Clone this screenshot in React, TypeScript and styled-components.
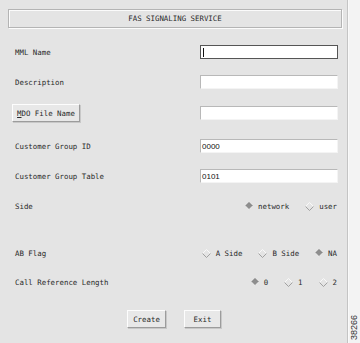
import { FC } from "react";
import styled, { createGlobalStyle } from "styled-components";

const GlobalStyle = createGlobalStyle`
  html, body {
    margin: 0;
    padding: 0;
    background: #f3f3f3;
  }
  body {
    font-family: "DejaVu Sans Mono", "Liberation Mono", monospace;
  }
`;

const Page = styled.div`
  display: flex;
  width: 360px;
  height: 343px;
  overflow: hidden;
`;

const Panel = styled.div`
  width: 348px;
  height: 343px;
  background: #e4e4e4;
  border-right: 1px solid #c4c4c4;
  box-shadow: 1px 0 0 #fafafa;
  display: flex;
  flex-direction: column;
  box-sizing: border-box;
  padding: 9px 0 0 0;
`;

const Strip = styled.div`
  flex: 1;
  display: flex;
  align-items: flex-end;
  justify-content: center;
  padding-bottom: 3px;
`;

const FigNo = styled.span`
  writing-mode: vertical-rl;
  transform: rotate(180deg);
  font-family: "Liberation Sans", Arial, sans-serif;
  font-size: 9px;
  color: #333;
`;

const TitleBar = styled.div`
  margin-left: 8px;
  width: 334px;
  height: 19px;
  box-sizing: border-box;
  border: 1px solid #b4b4b4;
  box-shadow: inset 1px 1px 0 #fbfbfb, 1px 1px 0 #fbfbfb;
  display: flex;
  align-items: center;
  justify-content: center;
  font-size: 7.4px;
  color: #2a2a2a;
`;

const Row = styled.div<{ $top: number; $h?: number }>`
  margin-top: ${(p) => p.$top}px;
  height: ${(p) => p.$h ?? 14}px;
  display: flex;
  align-items: center;
  padding: 0 9px 0 15px;
  font-size: 7.4px;
  color: #2a2a2a;
`;

const Label = styled.span`
  flex: 1;
`;

const Field = styled.div<{ $focused?: boolean }>`
  width: 138px;
  height: 14px;
  box-sizing: border-box;
  background: #fff;
  border-top: 1px solid ${(p) => (p.$focused ? "#555" : "#b8b8b8")};
  border-left: 1px solid ${(p) => (p.$focused ? "#555" : "#b8b8b8")};
  border-right: 1px solid ${(p) => (p.$focused ? "#555" : "#f4f4f4")};
  border-bottom: 1px solid ${(p) => (p.$focused ? "#555" : "#f4f4f4")};
  display: flex;
  align-items: center;
  padding-left: 1px;
  font-family: "Liberation Sans", Arial, sans-serif;
  font-size: 8px;
  color: #111;
`;

const Caret = styled.span`
  width: 1px;
  height: 9px;
  margin-left: 1px;
  background: #111;
`;

const Bevel = styled.button<{ $w: number }>`
  width: ${(p) => p.$w}px;
  height: 18px;
  padding: 0;
  box-sizing: border-box;
  background: #e8e8e8;
  border-top: 1px solid #fdfdfd;
  border-left: 1px solid #fdfdfd;
  border-right: 1px solid #9c9c9c;
  border-bottom: 1px solid #9c9c9c;
  box-shadow: 1px 1px 0 #c8c8c8;
  font-family: "DejaVu Sans Mono", "Liberation Mono", monospace;
  font-size: 7.4px;
  color: #2a2a2a;
  display: flex;
  align-items: center;
  justify-content: center;
`;

const MdoButton = styled(Bevel)`
  margin-left: -3px;
`;

const Mnemonic = styled.span`
  text-decoration: underline;
`;

const Choices = styled.div`
  display: flex;
  align-items: center;
  gap: 16px;
  padding-right: 1px;
`;

const Choice = styled.span`
  display: flex;
  align-items: center;
  gap: 5px;
`;

const ButtonBar = styled.div`
  margin-top: 21px;
  display: flex;
  gap: 18px;
  padding-left: 127px;
`;

const Diamond: FC<{ on?: boolean }> = ({ on }) =>
  on ? (
    <svg width="8" height="8" viewBox="0 0 9 9">
      <path d="M4.5 0.5 L8.5 4.5 L4.5 8.5 L0.5 4.5 Z" fill="#8e8e8e" />
      <path d="M0.5 4.5 L4.5 0.5 L8.5 4.5" fill="none" stroke="#707070" strokeWidth="0.8" />
      <path d="M0.5 4.5 L4.5 8.5 L8.5 4.5" fill="none" stroke="#fafafa" strokeWidth="0.8" />
    </svg>
  ) : (
    <svg width="9" height="9" viewBox="0 0 9 9">
      <path d="M0.5 4.5 L4.5 0.5 L8.5 4.5" fill="none" stroke="#fafafa" strokeWidth="0.9" />
      <path d="M0.5 4.5 L4.5 8.5 L8.5 4.5" fill="none" stroke="#999" strokeWidth="0.9" />
    </svg>
  );

const Radio: FC<{ on?: boolean; text: string }> = ({ on, text }) => (
  <Choice>
    <Diamond on={on} />
    {text}
  </Choice>
);

export default function App() {
  return (
    <>
      <GlobalStyle />
      <Page>
        <Panel>
          <TitleBar>FAS SIGNALING SERVICE</TitleBar>
          <Row $top={17}>
            <Label>MML Name</Label>
            <Field $focused>
              <Caret />
            </Field>
          </Row>
          <Row $top={16}>
            <Label>Description</Label>
            <Field />
          </Row>
          <Row $top={16} $h={16}>
            <Label>
              <MdoButton $w={68}>
                <Mnemonic>M</Mnemonic>DO File Name
              </MdoButton>
            </Label>
            <Field />
          </Row>
          <Row $top={18}>
            <Label>Customer Group ID</Label>
            <Field>0000</Field>
          </Row>
          <Row $top={16}>
            <Label>Customer Group Table</Label>
            <Field>0101</Field>
          </Row>
          <Row $top={16}>
            <Label>Side</Label>
            <Choices>
              <Radio on text="network" />
              <Radio text="user" />
            </Choices>
          </Row>
          <Row $top={33}>
            <Label>AB Flag</Label>
            <Choices>
              <Radio text="A Side" />
              <Radio text="B Side" />
              <Radio on text="NA" />
            </Choices>
          </Row>
          <Row $top={15}>
            <Label>Call Reference Length</Label>
            <Choices>
              <Radio on text="0" />
              <Radio text="1" />
              <Radio text="2" />
            </Choices>
          </Row>
          <ButtonBar>
            <Bevel $w={39}>Create</Bevel>
            <Bevel $w={37}>Exit</Bevel>
          </ButtonBar>
        </Panel>
        <Strip>
          <FigNo>38266</FigNo>
        </Strip>
      </Page>
    </>
  );
}
